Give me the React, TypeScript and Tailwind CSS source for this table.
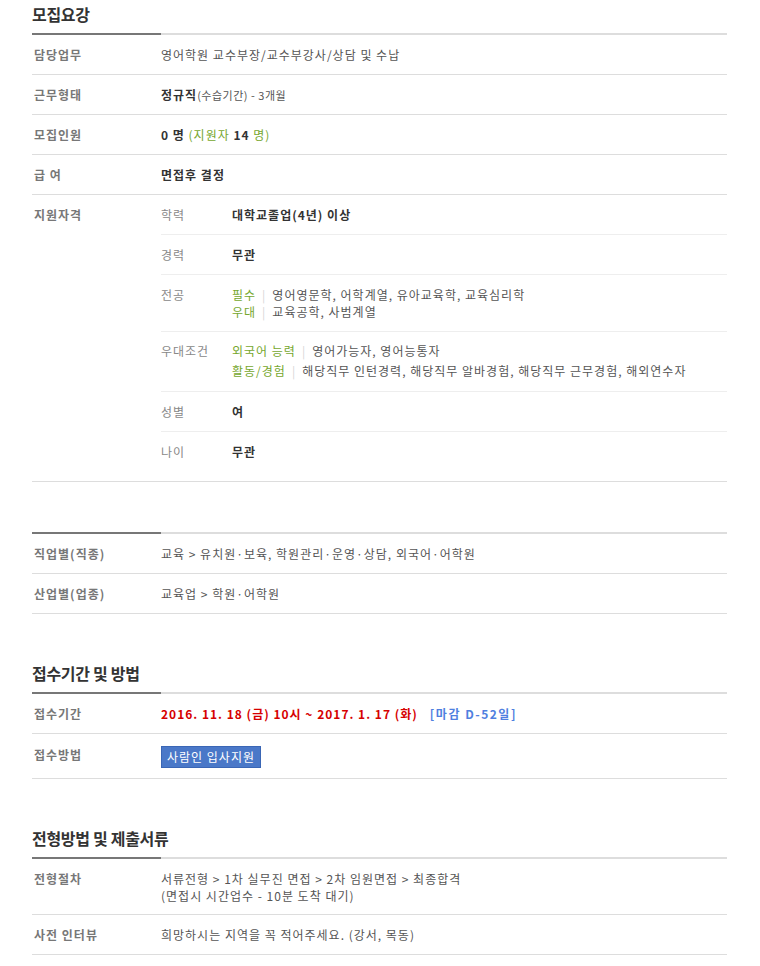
import React from 'react';

const font = { fontFamily: '"Noto Sans CJK KR", "Noto Sans", sans-serif' };

const Heading: React.FC<{ title: string; first?: boolean }> = ({ title, first }) => (
  <h2 className={`${first ? '' : 'mt-[45px]'} mb-[5px] text-[16px] leading-[28px] font-bold text-[#333] tracking-[-0.3px]`}>{title}</h2>
);

const Bar: React.FC = () => (
  <div className="flex h-[2px]">
    <div className="w-[129px] bg-[#777]" />
    <div className="flex-1 bg-[#ddd]" />
  </div>
);

const Row: React.FC<{ label: string; className?: string; valueClassName?: string; children: React.ReactNode }> = ({ label, className, valueClassName, children }) => (
  <div className={`flex border-b border-[#ddd] ${className ?? 'pt-[11px] pb-[11px]'}`}>
    <div className="w-[129px] shrink-0 pl-[2px] font-bold text-[#777] leading-[17px]">{label}</div>
    <div className={`flex-1 text-[#555] leading-[17px] ${valueClassName ?? ''}`}>{children}</div>
  </div>
);

const SubRow: React.FC<{ label: string; last?: boolean; className?: string; children: React.ReactNode }> = ({ label, last, className, children }) => (
  <div className={`flex ${last ? '' : 'border-b border-[#eee]'} ${className ?? 'pt-[11px] pb-[11px] leading-[17px]'}`}>
    <div className="w-[71px] shrink-0 text-[#888]">{label}</div>
    <div className="flex-1 text-[#555]">{children}</div>
  </div>
);

const Sep = () => <span className="mx-[6px] text-[#d5d5d5]">|</span>;
const Green: React.FC<{ children: React.ReactNode }> = ({ children }) => <span className="text-[#76a72e]">{children}</span>;

export default function App() {
  return (
    <div className="bg-white w-[760px] min-h-[966px] pl-[32px] pr-[33px] text-[12px] tracking-[1px]" style={font}>
      {/* 모집요강 */}
      <Heading title="모집요강" first />
      <Bar />
      <Row label="담당업무">영어학원 교수부장/교수부강사/상담 및 수납</Row>
      <Row label="근무형태">
        <b className="text-[#333]">정규직</b><span className="text-[11px] leading-none tracking-[0.5px]">(수습기간) - 3개월</span>
      </Row>
      <Row label="모집인원">
        <b className="text-[#333]">0 명</b> <Green>(지원자 <b className="text-[#333]">14</b> 명)</Green>
      </Row>
      <Row label="급 여"><b className="text-[#333]">면접후 결정</b></Row>
      <Row label="지원자격" className="pt-[11px] pb-[10px]">
        <div className="-mt-[11px]">
          <SubRow label="학력"><b className="text-[#333]">대학교졸업(4년) 이상</b></SubRow>
          <SubRow label="경력"><b className="text-[#333]">무관</b></SubRow>
          <SubRow label="전공" className="pt-[11px] pb-[11px] leading-[17px]">
            <div><Green>필수</Green><Sep />영어영문학, 어학계열, 유아교육학, 교육심리학</div>
            <div><Green>우대</Green><Sep />교육공학, 사범계열</div>
          </SubRow>
          <SubRow label="우대조건" className="pt-[9px] pb-[10px] leading-[20px]">
            <div><Green>외국어 능력</Green><Sep />영어가능자, 영어능통자</div>
            <div><Green>활동/경험</Green><Sep />해당직무 인턴경력, 해당직무 알바경험, 해당직무 근무경험, 해외연수자</div>
          </SubRow>
          <SubRow label="성별"><b className="text-[#333]">여</b></SubRow>
          <SubRow label="나이" last><b className="text-[#333]">무관</b></SubRow>
        </div>
      </Row>

      {/* 직종 / 업종 */}
      <div className="mt-[50px]">
        <Bar />
        <Row label="직업별(직종)">교육 &gt; 유치원·보육, 학원관리·운영·상담, 외국어·어학원</Row>
        <Row label="산업별(업종)">교육업 &gt; 학원·어학원</Row>
      </div>

      {/* 접수기간 및 방법 */}
      <Heading title="접수기간 및 방법" />
      <Bar />
      <Row label="접수기간">
        <b className="text-[#d60000]">2016. 11. 18 (금) 10시 ~ 2017. 1. 17 (화)</b>
        <b className="ml-[12px] text-[#4f7fe0] tracking-[1.5px]">[마감 D-52일]</b>
      </Row>
      <Row label="접수방법" className="pt-[12px] pb-[10px]" valueClassName="flex items-start">
        <button className="h-[22px] px-[5px] bg-[#4a78c8] border border-[#3a66b5] text-white text-[12px] leading-[20px] tracking-[1px]">
          사람인 입사지원
        </button>
      </Row>

      {/* 전형방법 및 제출서류 */}
      <Heading title="전형방법 및 제출서류" />
      <Bar />
      <Row label="전형절차" className="pt-[11px] pb-[10px]">
        <div>서류전형 &gt; 1차 실무진 면접 &gt; 2차 임원면접 &gt; 최종합격</div>
        <div>(면접시 시간업수 - 10분 도착 대기)</div>
      </Row>
      <Row label="사전 인터뷰">희망하시는 지역을 꼭 적어주세요. (강서, 목동)</Row>
    </div>
  );
}
